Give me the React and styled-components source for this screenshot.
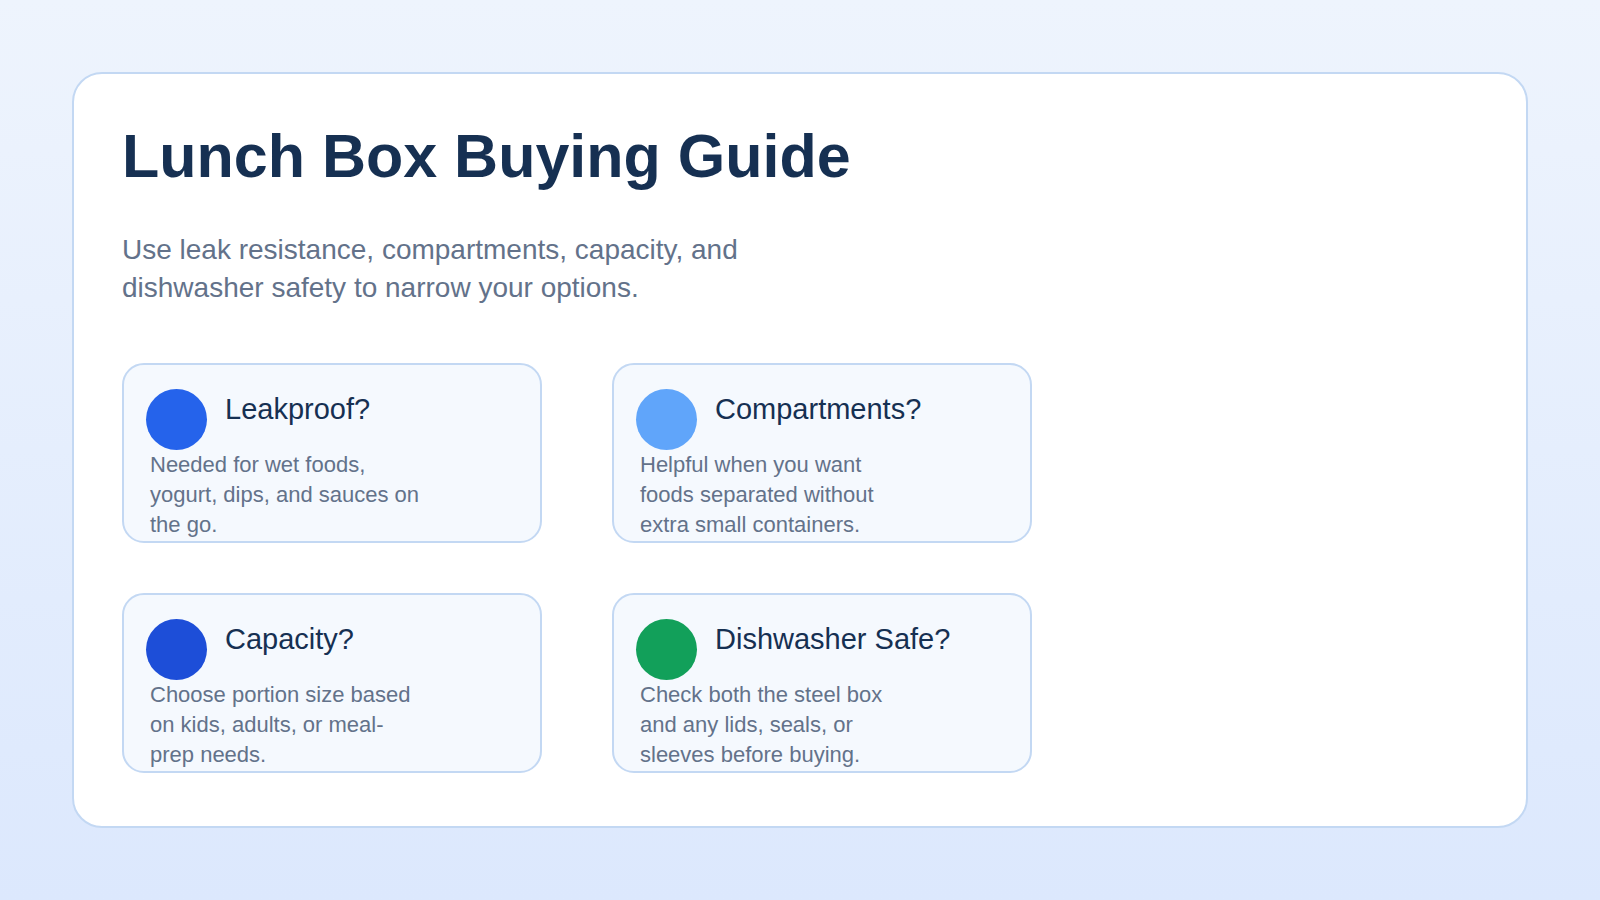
import React from 'react';
import styled, { createGlobalStyle } from 'styled-components';

const Global = createGlobalStyle`
  html, body { margin: 0; height: 100%; }
  body {
    font-family: "Liberation Sans", Arial, sans-serif;
    background: linear-gradient(180deg, #eef4fd 0%, #dce8fd 100%);
  }
`;

const Page = styled.div`
  height: 900px;
  padding: 72px;
  box-sizing: border-box;
`;

const Card = styled.div`
  height: 100%;
  box-sizing: border-box;
  background: #fff;
  border: 2px solid #c3d8f3;
  border-radius: 30px;
  padding: 46px 48px;
`;

const Title = styled.h1`
  margin: 0;
  font-size: 61px;
  font-weight: 700;
  color: #163052;
  line-height: 1.2;
`;

const Subtitle = styled.p`
  margin: 38px 0 0;
  max-width: 680px;
  font-size: 28px;
  line-height: 38px;
  color: #63728a;
`;

const Grid = styled.div`
  margin-top: 56px;
  display: grid;
  grid-template-columns: 420px 420px;
  grid-auto-rows: 180px;
  column-gap: 70px;
  row-gap: 50px;
`;

const Item = styled.div`
  background: #f5f9fe;
  border: 2px solid #c3d8f3;
  border-radius: 22px;
  padding: 24px 24px 0 22px;
  box-sizing: border-box;
`;

const Head = styled.div`
  display: flex;
  gap: 18px;
  align-items: flex-start;
`;

const Dot = styled.div`
  width: 61px;
  height: 61px;
  border-radius: 50%;
  background: ${p => p.color};
  flex: none;
`;

const ItemTitle = styled.div`
  font-size: 29px;
  color: #163052;
  padding-top: 4px;
`;

const Desc = styled.div`
  max-width: 270px;
  font-size: 22px;
  line-height: 30px;
  color: #63728a;
  margin-left: 4px;
`;

const items = [
  { c: '#2563eb', t: 'Leakproof?', d: 'Needed for wet foods, yogurt, dips, and sauces on the go.' },
  { c: '#60a5fa', t: 'Compartments?', d: 'Helpful when you want foods separated without extra small containers.' },
  { c: '#1d4ed8', t: 'Capacity?', d: 'Choose portion size based on kids, adults, or meal-prep needs.' },
  { c: '#12a05a', t: 'Dishwasher Safe?', d: 'Check both the steel box and any lids, seals, or sleeves before buying.' },
];

export default function App() {
  return (
    <Page>
      <Global />
      <Card>
        <Title>Lunch Box Buying Guide</Title>
        <Subtitle>Use leak resistance, compartments, capacity, and dishwasher safety to narrow your options.</Subtitle>
        <Grid>
          {items.map(i => (
            <Item key={i.t}>
              <Head>
                <Dot color={i.c} />
                <ItemTitle>{i.t}</ItemTitle>
              </Head>
              <Desc>{i.d}</Desc>
            </Item>
          ))}
        </Grid>
      </Card>
    </Page>
  );
}
